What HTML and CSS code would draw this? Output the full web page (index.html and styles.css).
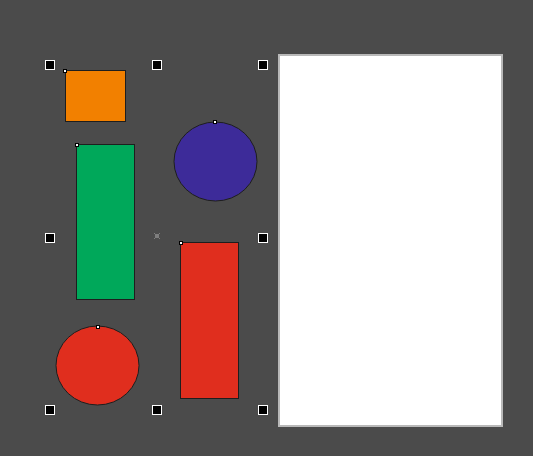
FILE: index.html
```html
<!DOCTYPE html>
<html>
<head>
<meta charset="utf-8">
<link rel="stylesheet" href="styles.css">
</head>
<body>
<div class="canvas">
<svg class="stage" width="533" height="456" viewBox="0 0 533 456">
  <rect class="page-edge" x="278" y="54" width="225" height="373"/>
  <rect class="page" x="280" y="56" width="221" height="369"/>

  <rect class="shape orange" x="65.5" y="70.5" width="60" height="51"/>
  <rect class="shape green" x="76.5" y="144.5" width="58" height="155"/>
  <ellipse class="shape blue" cx="215.5" cy="161.5" rx="41.5" ry="39.5"/>
  <rect class="shape red" x="180.5" y="242.5" width="58" height="156"/>
  <ellipse class="shape red" cx="97.5" cy="365.5" rx="41.5" ry="39.5"/>

  <rect class="pt" x="63.5" y="69.5" width="3" height="3"/>
  <rect class="pt" x="75.5" y="143.5" width="3" height="3"/>
  <rect class="pt" x="213.5" y="120.5" width="3" height="3"/>
  <rect class="pt" x="179.5" y="241.5" width="3" height="3"/>
  <rect class="pt" x="96.5" y="325.5" width="3" height="3"/>

  <g class="center">
    <path d="M154 233 L160 239 M160 233 L154 239"/>
    <rect x="155.5" y="234.5" width="3" height="3"/>
  </g>

  <rect class="handle" x="45.5" y="60.5" width="9" height="9"/>
  <rect class="handle" x="152.5" y="60.5" width="9" height="9"/>
  <rect class="handle" x="258.5" y="60.5" width="9" height="9"/>
  <rect class="handle" x="45.5" y="233.5" width="9" height="9"/>
  <rect class="handle" x="258.5" y="233.5" width="9" height="9"/>
  <rect class="handle" x="45.5" y="405.5" width="9" height="9"/>
  <rect class="handle" x="152.5" y="405.5" width="9" height="9"/>
  <rect class="handle" x="258.5" y="405.5" width="9" height="9"/>
</svg>
</div>
</body>
</html>
```
FILE: styles.css
```css
html, body {
  margin: 0;
  padding: 0;
  background: #4b4b4b;
  overflow: hidden;
}
.canvas {
  width: 533px;
  height: 456px;
}
.stage {
  display: block;
}
.page-edge {
  fill: #b9b9b9;
}
.page {
  fill: #ffffff;
}
.shape {
  stroke: #1e1e1e;
  stroke-width: 1;
}
.orange { fill: #f28000; }
.green { fill: #00a85a; }
.blue { fill: #3d2b99; }
.red { fill: #e02e1e; }
.pt {
  fill: #ffffff;
  stroke: #000000;
  stroke-width: 1;
}
.handle {
  fill: #000000;
  stroke: #ffffff;
  stroke-width: 1;
}
.center path,
.center rect {
  stroke: #7e7e7e;
  stroke-width: 1;
  fill: none;
}
```
